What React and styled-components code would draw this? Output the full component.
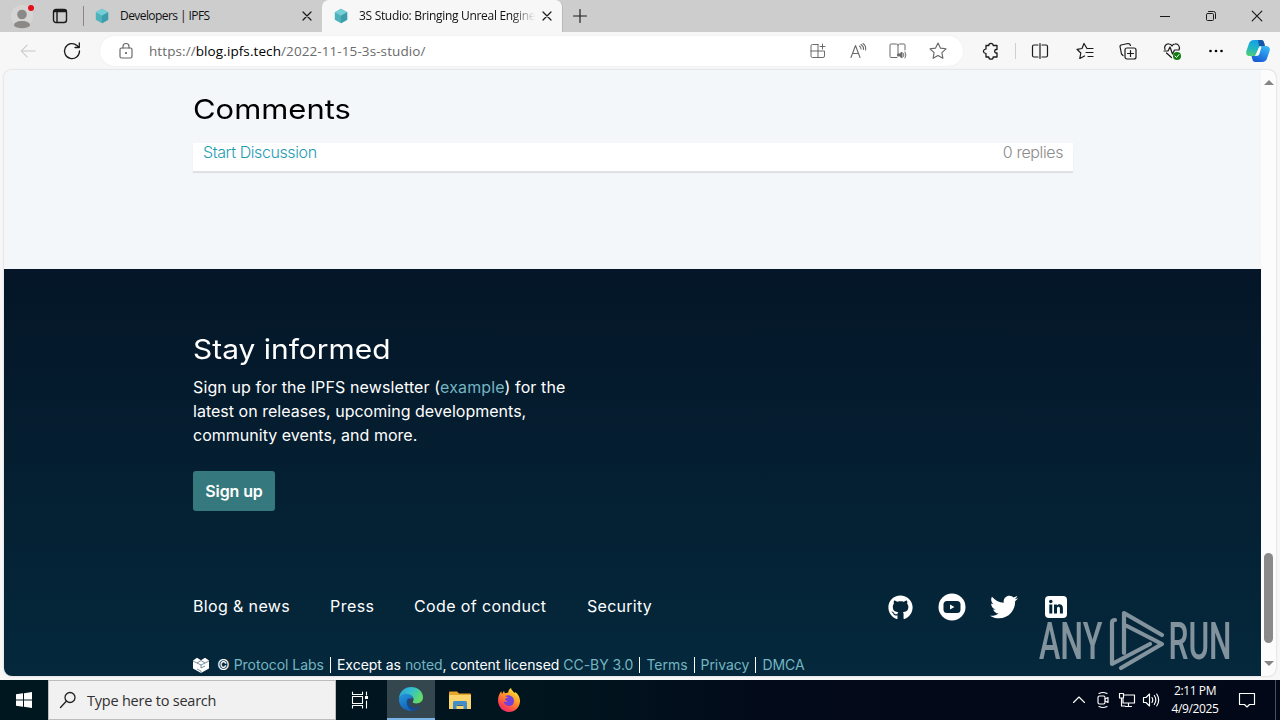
import React from 'react';
import styled, {createGlobalStyle} from 'styled-components';
import {FaGithub, FaTwitter} from 'react-icons/fa';

const GlobalStyle = createGlobalStyle`
  * {
    box-sizing: border-box;
  }
  body {
    margin: 0;
    overflow: hidden;
    font-family: "Open Sans", "Noto Sans", sans-serif;
  }
  svg {
    display: block;
    flex: none;
  }
`;

const Screen = styled.div`
  position: relative;
  display: flex;
  flex-direction: column;
  width: 1280px;
  height: 720px;
  overflow: hidden;
  background: #f7f7f7;
`;

const Slot = styled.span`
  display: flex;
  flex: none;
  align-items: center;
  justify-content: center;
  width: ${({width}) => width}px;
  height: 100%;
`;

const Line = styled.svg`
  width: ${({size}) => size || 20}px;
  height: ${({size}) => size || 20}px;
  fill: none;
  stroke: ${({color}) => color || '#1b1b1b'};
  stroke-width: ${({weight}) => weight || 1.15};
  stroke-linecap: round;
  stroke-linejoin: round;
`;

/* ---------- browser tabs ---------- */

const TabBar = styled.header`
  display: flex;
  height: 32px;
  background: #cdcdcd;
`;

const Separator = styled.span`
  flex: none;
  align-self: center;
  width: 1px;
  height: ${({height}) => height}px;
  margin-left: ${({left}) => left || 0}px;
  background: ${({color}) => color};
`;

const Tab = styled.div`
  display: flex;
  align-items: center;
  width: ${({width}) => width}px;
  padding: 0 8px 0 ${({active}) => active ? 12 : 11}px;
  background: ${({active}) => active ? '#f7f7f7' : 'transparent'};
  border-radius: 7px 7px 0 0;
  border-right: 1px solid ${({active}) => active ? '#b9b9b9' : 'transparent'};
`;

const TabTitle = styled.span`
  flex: 1;
  margin-left: 11px;
  overflow: hidden;
  white-space: nowrap;
  font-size: 12px;
  line-height: 18px;
  letter-spacing: ${({spacing}) => spacing}px;
  color: #111;
  ${({fade}) => fade && 'mask-image: linear-gradient(90deg, #000 152px, transparent 176px);'}
`;

const WindowControls = styled.div`
  display: flex;
  margin-left: auto;
`;

/* ---------- toolbar ---------- */

const Toolbar = styled.div`
  display: flex;
  align-items: center;
  height: 38px;
  padding-left: 6px;
`;

const AddressBar = styled.div`
  display: flex;
  align-items: center;
  width: 863px;
  height: 30px;
  margin: 0 3px 0 6px;
  padding: 0 6px 0 16px;
  border-radius: 15px;
  background: white;
  box-shadow: 0 0 2px #e8e8e8;
`;

const Url = styled.span`
  flex: 1;
  margin-left: 13px;
  font-size: 13.5px;
  letter-spacing: ${({spacing}) => spacing}px;
  color: #6b6b6b;
  b {
    font-weight: 400;
    color: #000;
  }
`;

/* ---------- web page ---------- */

const Viewport = styled.main`
  display: flex;
  height: 606px;
  margin: 0 4px 4px;
  overflow: hidden;
  border-radius: 8px;
  background: #fcfcfc;
  box-shadow: 0 0 2px #bdbdbd;
`;

const Page = styled.div`
  display: flex;
  flex-direction: column;
  width: 1257px;
  background: #f4f7fa;
  font-family: Inter, sans-serif;
`;

const Comments = styled.section`
  height: 199px;
  padding: 20px 188px 0 189px;
`;

const Heading = styled.h2`
  margin: 0;
  width: max-content;
  font-size: 27.5px;
  font-weight: 400;
  line-height: 38px;
  color: ${({color}) => color};
  transform: scaleX(${({stretch}) => stretch});
  transform-origin: left;
`;

const Thread = styled.div`
  display: flex;
  justify-content: space-between;
  height: 28px;
  margin-top: 15px;
  padding: 0 10px;
  background: white;
  box-shadow: 0 2px 1px rgba(0, 0, 0, 0.09);
  font-size: 16px;
  font-weight: 300;
  line-height: 19px;
  letter-spacing: -0.4px;
  color: #8b8b8b;
`;

const ThreadLink = styled.a`
  color: #1f9bb3;
`;

const Footer = styled.footer`
  display: flex;
  flex-direction: column;
  height: 407px;
  padding: 61px 188px 0 189px;
  background: linear-gradient(#041627, #05283c);
  color: white;
`;

const Newsletter = styled.p`
  margin: 7px 0 0;
  font-size: 16px;
  line-height: 24px;
`;

const NewsletterLine = styled.span`
  display: block;
  letter-spacing: ${({spacing}) => spacing}px;
`;

const Link = styled.a`
  color: #73b5c1;
`;

const SignUp = styled.button`
  width: 82px;
  height: 40px;
  margin-top: 24px;
  padding: 0;
  border: 0;
  border-radius: 3px;
  background: #35797e;
  color: white;
  font-family: Inter, sans-serif;
  font-size: 16px;
  font-weight: 600;
  letter-spacing: -0.1px;
`;

const FooterNav = styled.nav`
  display: flex;
  align-items: center;
  height: 30px;
  margin-top: 80px;
`;

const NavLink = styled.a`
  width: ${({width}) => width}px;
  white-space: nowrap;
  font-size: 16px;
  letter-spacing: ${({spacing}) => spacing}px;
`;

const Social = styled.div`
  display: flex;
  align-items: center;
  height: 30px;
  margin: 2px -9px 0 auto;
`;

const Legal = styled.div`
  display: flex;
  align-items: center;
  margin-top: 34px;
  height: 20px;
  white-space: nowrap;
  font-size: 14px;
  letter-spacing: ${({spacing}) => spacing}px;
  svg {
    margin-right: 8px;
  }
`;

const LegalText = styled.span`
  padding-right: 6px;
  line-height: 16px;
  & + & {
    padding-left: 6px;
    border-left: 1px solid white;
  }
`;

const Scrollbar = styled.div`
  display: flex;
  flex: 1;
  flex-direction: column;
  align-items: center;
  padding: 10px 0;
`;

const Arrow = styled.span`
  border: 5px solid transparent;
  border-top-width: ${({up}) => up ? 0 : 5}px;
  border-bottom-width: ${({up}) => up ? 5 : 0}px;
  border-${({up}) => up ? 'bottom' : 'top'}-color: #858585;
`;

const Thumb = styled.span`
  width: 9px;
  height: 90px;
  margin: auto 0 18px;
  border-radius: 5px;
  background: #8a8a8a;
`;

/* sits over the page in the corner */
const Watermark = styled.svg`
  position: absolute;
  left: 1036px;
  top: 606px;
  width: 210px;
  height: 70px;
  opacity: 0.5;
`;

/* ---------- taskbar ---------- */

const Taskbar = styled.footer`
  display: flex;
  align-items: center;
  height: 40px;
  background: linear-gradient(90deg, #001720, #00141e 45%, #030a1a 60%, #020817);
  color: white;
`;

const Search = styled.div`
  display: flex;
  align-items: center;
  width: 288px;
  height: 40px;
  padding-left: 10px;
  border: 1px solid #bcbcbc;
  background: #f1f1f1;
  color: #303030;
  font-size: 14.5px;
  letter-spacing: ${({spacing}) => spacing}px;
  svg {
    margin-right: 10px;
  }
`;

const ActiveApp = styled.div`
  display: flex;
  align-items: center;
  justify-content: center;
  width: 48px;
  height: 40px;
  margin-left: 3px;
  border-bottom: 2px solid #78b4e5;
  background: #34464e;
`;

const Tray = styled.div`
  display: flex;
  align-items: center;
  height: 40px;
  margin-left: auto;
`;

const Clock = styled.div`
  width: 64px;
  text-align: center;
  font-size: 12px;
  line-height: 18px;
  letter-spacing: -0.4px;
`;

const CubeIcon = () => (
  <svg width="14" height="16" viewBox="0 0 14 16">
    <path d="M7 .8 13.2 4.3v7.4L7 15.2.8 11.7V4.3z" fill="#4db2bc" />
    <path d="M7 .8 13.2 4.3 7 7.8.8 4.3z" fill="#75ced4" />
    <path d="M7 7.8 13.2 4.3v7.4L7 15.2z" fill="#3c9dab" />
  </svg>
);

const CloseIcon = ({size = 10, weight = 1.2}) => (
  <Line size={size} weight={weight} viewBox="0 0 10 10"><path d="m1 1 8 8M9 1 1 9" /></Line>
);

const EdgeLogo = () => (
  <svg width="26" height="26" viewBox="0 0 26 26">
    <defs>
      <linearGradient id="edgeTop" x1="0" y1="0" x2="1" y2="0.5">
        <stop offset="0" stopColor="#279fd9" />
        <stop offset="0.5" stopColor="#34bfce" />
        <stop offset="1" stopColor="#62dc66" />
      </linearGradient>
      <linearGradient id="edgeBody" x1="0" y1="0" x2="0.6" y2="1">
        <stop offset="0" stopColor="#2598dc" />
        <stop offset="1" stopColor="#105db2" />
      </linearGradient>
    </defs>
    <path d="M1 12C1.600 5.500 6.800 1 13 1c7 0 12 4.800 12 10.300 0 4-3 6.200-6.700 6.200-2.500 0-4-.8-3.500-1.700 1.700-2.200.8-6-3.600-7C7 8 3 9 1 12z" fill="url(#edgeTop)" />
    <path d="M1 13C1.500 9.500 5 7.600 8.600 7.700c3.600.1 6.500 2.200 6.500 5-1.900-1.200-5.200.2-5.200 4.100 0 4 5.500 7.200 12.100 4.300C19.500 24 16.500 25 13 25 6 25 .5 19.500 1 13z" fill="url(#edgeBody)" />
    <path d="M10 12.500c-3 4-.8 9.800 4.700 12.300 3-.2 5.500-1.500 7.500-3.700-6 2.200-11.500-1-11.500-4.700 0-1.700.6-3 1.900-4z" fill="#174a91" />
  </svg>
);

const FolderIcon = () => (
  <svg width="22" height="19" viewBox="0 0 22 19">
    <path d="M0 1.500Q0 .5 1 .5h7l2 2h11q1 0 1 1V17H0z" fill="#e7a62c" />
    <path d="M0 4h22v14H0z" fill="#fbd56b" />
    <path d="M4 18V11.500Q4 10 5.500 10h11Q18 10 18 11.500V18h-3.500v-4.500h-7V18z" fill="#3c8fcb" />
    <path d="M7.500 13.500h7V15h-7z" fill="#286ca2" />
  </svg>
);

const FirefoxLogo = () => (
  <svg width="24" height="24" viewBox="0 0 24 24">
    <defs>
      <linearGradient id="fox" x1="0.8" y1="0" x2="0.2" y2="1">
        <stop offset="0" stopColor="#fff13b" />
        <stop offset="0.45" stopColor="#ff9028" />
        <stop offset="0.8" stopColor="#fb3e52" />
        <stop offset="1" stopColor="#e22a80" />
      </linearGradient>
    </defs>
    <path d="M1 12C1 9 2.200 6 4.200 3.300L5 6l2-3.300.8 2.500 3.500-.8C11.200 2.500 12.500 1 14 0c.4 2.300 2 3 3.700 5l.5-1c3.300 2.300 5 6 4.800 9.500C22.500 19.500 18 24 12 24S1 19 1 12z" fill="url(#fox)" />
    <path d="M8 8c4-2 9 .3 9 5 0 3-2.200 5-5 5-3 0-5-2-5.300-4.700 1.500 1 3 .8 4-.2-2.200-.3-3.200-1.400-2-2.800 1-.3 2-.3 2.500-1.200C9.800 9 9 8.700 8 8z" fill="#7441d8" />
  </svg>
);

const Copilot = () => (
  <svg width="24" height="24" viewBox="0 0 24 24">
    <defs>
      <linearGradient id="copLeft" x1="0.5" y1="0" x2="0.2" y2="1">
        <stop offset="0" stopColor="#159fe8" />
        <stop offset="0.55" stopColor="#22b8c0" />
        <stop offset="1" stopColor="#54cd74" />
      </linearGradient>
      <linearGradient id="copRight" x1="0.8" y1="0" x2="0.3" y2="1">
        <stop offset="0" stopColor="#37b9f5" />
        <stop offset="1" stopColor="#1559d6" />
      </linearGradient>
    </defs>
    <path d="M8 1h7c2 0 2.500 1.200 3 3l.7 2.500H14L9 17H4c-3 0-4.500-2-3.600-5L3 4.500C3.700 2.300 5.300 1 8 1z" fill="url(#copLeft)" />
    <path d="M12 1h3.500c1.700 0 2.300 1.500 2.700 3l.8 3h-6z" fill="#1657a8" />
    <path d="M16 23H9.500c-2 0-2.700-1.200-3.200-3l-.8-3H10l5-10h5c3 0 4.500 2 3.600 5L21 19.500c-.7 2.200-2.300 3.500-5 3.500z" fill="url(#copRight)" />
    <path d="m13 8.300-3.200 8.500h1.600c1 0 1.600-.8 1.900-1.700L15.500 8z" fill="white" />
  </svg>
);

const App = () => {
  return (
    <>
      <GlobalStyle />
      <Screen>
        <TabBar>
          <Slot width={44}>
            <svg width="24" height="26" viewBox="0 0 24 26">
              <circle cx="12" cy="13" r="11" fill="#d7d5d3" />
              <circle cx="12" cy="11.500" r="4.800" fill="#8b8987" />
              <path d="M4 22.500c0-3 3-4.500 8-4.500s8 1.500 8 4.500c-2 3.500-14 3.500-16 0z" fill="#8b8987" />
              <circle cx="21" cy="5" r="3" fill="#e3101b" />
            </svg>
          </Slot>
          <Slot width={32}>
            <Line size={16} viewBox="0 0 16 16" weight={1.4}>
              <rect x="1.500" y="1.500" width="13" height="13" rx="2.500" />
              <path d="M2 3.500h12M2 2.500h12M5 4v10" />
            </Line>
          </Slot>
          <Separator height={20} left={7} color="#888" />
          <Tab width={238}>
            <CubeIcon />
            <TabTitle spacing={-0.57}>Developers | IPFS</TabTitle>
            <Slot width={12}><CloseIcon /></Slot>
          </Tab>
          <Tab width={241} active>
            <CubeIcon />
            <TabTitle spacing={-0.31} fade>3S Studio: Bringing Unreal Engine</TabTitle>
            <Slot width={14}><CloseIcon /></Slot>
          </Tab>
          <Slot width={33}>
            <Line size={14} viewBox="0 0 14 14"><path d="M7 .5v13M.5 7h13" /></Line>
          </Slot>
          <WindowControls>
            <Slot width={46}><Line size={10} viewBox="0 0 10 10"><path d="M0 5.500h10" /></Line></Slot>
            <Slot width={46}>
              <Line size={10} viewBox="0 0 10 10" weight={1}>
                <rect x=".5" y="2.500" width="7" height="7" rx="1" />
                <path d="M2.500.5h5q2 0 2 2v5" />
              </Line>
            </Slot>
            <Slot width={46}><CloseIcon size={12} weight={1} /></Slot>
          </WindowControls>
        </TabBar>

        <Toolbar>
          <Slot width={44}>
            <Line color="#c6c6c6" size={18} viewBox="0 0 20 20"><path d="M18 10H2.500M9 3.500 2.500 10 9 16.500" /></Line>
          </Slot>
          <Slot width={44}>
            <Line weight={1.3}><path d="M17.500 10A7.500 7.500 0 1 1 15 4.500L17 6.500M17.300 2v4.500H13" /></Line>
          </Slot>
          <AddressBar>
            <Slot width={20}>
              <Line color="#666" size={18} viewBox="0 0 18 18">
                <rect x="3" y="6" width="12" height="10" rx="1.500" />
                <path d="M6 6V4.500a3 3 0 0 1 6 0V6" />
                <circle cx="9" cy="11" r=".5" fill="#666" />
              </Line>
            </Slot>
            <Url spacing={0.09}>https://<b>blog.ipfs.tech</b>/2022-11-15-3s-studio/</Url>
            <Slot width={40}>
              <Line color="#6b6b6b" weight={1}>
                <path d="M10 3.500H4.500Q3 3.500 3 5v10q0 1.500 1.500 1.500H15q1.500 0 1.500-1.500v-5H3M10 3.500v13M14.500 3v5M12 5.500h5" />
              </Line>
            </Slot>
            <Slot width={40}>
              <Line color="#6b6b6b" weight={1.1}>
                <path d="M3 16.500 7.500 4.500 12 16.500M4.500 12.500h6M11.500 5q1.500 1 1.500 3M13 3.500q3 2 2.500 5M15 2.500q3.500 2.500 2.500 6.500" />
              </Line>
            </Slot>
            <Slot width={40}>
              <Line color="#6b6b6b" weight={1}>
                <path d="M9 16.500H3q-1 0-1-1V4q0-1 1-1h5.500Q10 3 10 4.500V13M10 4.500Q10 3 11.500 3H16q1 0 1 1v5" />
                <path d="M10 13h1.500l2.500-2v6l-2.500-2H10z" fill="#6b6b6b" />
                <path d="M15.500 12.500q1 1.500 0 3M17 11q2 3 0 6" />
              </Line>
            </Slot>
            <Slot width={39}>
              <Line color="#666" weight={1.1}>
                <path d="m10 2 2.400 5.100 5.600.7-4.100 3.900 1 5.600-4.900-2.700-4.900 2.700 1-5.600L2 7.800l5.600-.7z" />
              </Line>
            </Slot>
          </AddressBar>
          <Slot width={49}>
            <Line weight={1.3}>
              <path d="M5 4.500h2.800a2.200 2.200 0 0 1 4.400 0H16v4h-1a1.800 1.800 0 0 0 0 3.500h1v4h-3.800a2.200 2.200 0 0 1-4.400 0H5v-3.500L3.500 12a2 2 0 0 1 0-3.500L5 8z" />
            </Line>
          </Slot>
          <Separator height={16} color="#cfcfcf" />
          <Slot width={48}>
            <Line weight={1.2}><path d="M8 4H4Q2.500 4 2.500 5.500v9Q2.500 16 4 16h4M12 4h4q1.500 0 1.500 1.500v9Q17.500 16 16 16h-4M10 2.500v15" /></Line>
          </Slot>
          <Slot width={41}>
            <Line weight={1.2}><path d="M12 7.500 9 2.500 7 7.500l-5 .8 3.800 3.700-1 5.500L9.500 15M12 7.500h6M11 11.500h7M13 15.500h5" /></Line>
          </Slot>
          <Slot width={45}>
            <Line weight={1.2}>
              <rect x="7" y="7" width="11" height="11" rx="2" />
              <path d="M12.500 9.500v6M9.500 12.500h6M5 14.500 3.500 13 2 5.500Q2 4.500 3 4l7-1.500q2 0 2.500 2" />
            </Line>
          </Slot>
          <Slot width={44}>
            <Line weight={1.2}>
              <path d="M3 8.500C1.500 5 4.500 2.500 7 3c1.500 0 2.500 1 3 2 .5-1 1.500-2 3-2 3-.5 5.500 2.500 4 6M2 10h4l2-4 2.500 7 2-4h4.500M4.500 12l5 4.500" />
              <circle cx="15" cy="15" r="4" fill="#107c10" stroke="none" />
              <path d="m13 15 1.500 1.500 2.500-3" stroke="white" strokeWidth="1" />
            </Line>
          </Slot>
          <Slot width={43}>
            <svg width="16" height="4" viewBox="0 0 16 4"><circle cx="2.500" cy="2" r="1.300" /><circle cx="8" cy="2" r="1.300" /><circle cx="13.500" cy="2" r="1.300" /></svg>
          </Slot>
          <Slot width={41}><Copilot /></Slot>
        </Toolbar>

        <Viewport>
          <Page>
            <Comments>
              <Heading color="#000" stretch={1.125}>Comments</Heading>
              <Thread>
                <ThreadLink>Start Discussion</ThreadLink>
                <span>0 replies</span>
              </Thread>
            </Comments>
            <Footer>
              <Heading color="#fff" stretch={1.088}>Stay informed</Heading>
              <Newsletter>
                <NewsletterLine spacing={0.12}>Sign up for the IPFS newsletter (<Link>example</Link>) for the</NewsletterLine>
                <NewsletterLine spacing={0.02}>latest on releases, upcoming developments,</NewsletterLine>
                <NewsletterLine spacing={0.02}>community events, and more.</NewsletterLine>
              </Newsletter>
              <SignUp>Sign up</SignUp>
              <FooterNav>
                <NavLink width={137} spacing={0.36}>Blog &amp; news</NavLink>
                <NavLink width={84} spacing={0.45}>Press</NavLink>
                <NavLink width={173} spacing={0.38}>Code of conduct</NavLink>
                <NavLink width={70} spacing={0.27}>Security</NavLink>
                <Social>
                  <Slot width={52}><FaGithub size={25} /></Slot>
                  <Slot width={52}>
                    <svg width="28" height="28" viewBox="0 0 28 28">
                      <circle cx="14" cy="14" r="13.500" fill="white" />
                      <rect x="5.500" y="8" width="17" height="12" rx="3.500" fill="#052539" />
                      <path d="m12 11.500 4.500 2.500-4.500 2.500z" fill="white" />
                    </svg>
                  </Slot>
                  <Slot width={52}><FaTwitter size={28} /></Slot>
                  <Slot width={52}>
                    <svg width="22" height="22" viewBox="0 0 22 22">
                      <rect width="22" height="22" rx="4" fill="white" />
                      <circle cx="5.800" cy="5.500" r="1.700" fill="#052539" />
                      <path d="M4.300 8.500h3v9h-3zM9 8.500h2.900v1.200c1.500-2.300 6-1.900 6 2.300v5.500h-3v-5c0-2.300-2.900-2.200-2.900 0v5H9z" fill="#052539" />
                    </svg>
                  </Slot>
                </Social>
              </FooterNav>
              <Legal spacing={-0.03}>
                <svg width="16" height="16" viewBox="0 0 16 16">
                  <path d="m0 3.500 4-2.800 4 2.500L12 .7l4 2.800v8L8 16l-8-4.500z" fill="white" />
                  <path d="m0 4 8 4 8-4M8 8v3l4-2M8 16v-2l-4-2M4 6l4-2.500L12 6" fill="none" stroke="#5d7482" strokeWidth=".8" />
                </svg>
                <LegalText>© <Link>Protocol Labs</Link></LegalText>
                <LegalText>Except as <Link>noted</Link>, content licensed <Link>CC-BY 3.0</Link></LegalText>
                <LegalText><Link>Terms</Link></LegalText>
                <LegalText><Link>Privacy</Link></LegalText>
                <LegalText><Link>DMCA</Link></LegalText>
              </Legal>
            </Footer>
          </Page>
          <Scrollbar>
            <Arrow up />
            <Thumb />
            <Arrow />
          </Scrollbar>
        </Viewport>

        <Taskbar>
          <Slot width={48}>
            <svg width="16" height="16" viewBox="0 0 16 16" fill="white">
              <path d="M0 2.300 7 1.300v6.200H0zM8 1.200 16 0v7.500H8zM0 8.500h7v6.200l-7-1zM8 8.500h8V16l-8-1.200z" />
            </svg>
          </Slot>
          <Search spacing={-0.22}>
            <Line size={18} viewBox="0 0 18 18" color="#222" weight={1.3}><circle cx="11" cy="6.500" r="5" /><path d="M7.500 10 1.500 16.500" /></Line>
            Type here to search
          </Search>
          <Slot width={48}>
            <Line size={18} viewBox="0 0 18 18" color="#fff" weight={1.1}>
              <path d="M1.500 1v2.500h10V1M1.500 17v-2.500h10V17M1.500 5.500h10v7h-10zM15.500 1v3M15.500 10v7" />
              <rect x="14.500" y="5.500" width="2" height="2" fill="white" />
            </Line>
          </Slot>
          <ActiveApp><EdgeLogo /></ActiveApp>
          <Slot width={50}><FolderIcon /></Slot>
          <Slot width={48}><FirefoxLogo /></Slot>
          <Tray>
            <Slot width={24}><Line size={14} viewBox="0 0 14 14" color="#fff"><path d="m1.500 9.500 5.500-5.500 5.500 5.500" /></Line></Slot>
            <Slot width={24}>
              <Line size={18} viewBox="0 0 18 18" color="#fff">
                <rect x="4" y="5" width="7" height="8" rx="1.500" />
                <path d="m11 8 3-1.500v5L11 10M5 2.500q4-2 8 0M5 15.500q4 2 8 0" />
              </Line>
            </Slot>
            <Slot width={24}>
              <Line size={18} viewBox="0 0 18 18" color="#fff">
                <path d="M6 4h10.500v8H5V8M10.500 12v3M7.500 15.500h6M1.500 2.500h4V7h-4zM3.500 7v8H7" />
              </Line>
            </Slot>
            <Slot width={24}>
              <Line size={18} viewBox="0 0 18 18" color="#fff">
                <path d="M1.500 6.500H4L7.500 3v12L4 11.500H1.500zM10 6.500q1.500 2.500 0 5M12.300 4.500q3 4.500 0 9M14.700 3q4 6 0 12" />
              </Line>
            </Slot>
            <Clock>2:11 PM<br />4/9/2025</Clock>
            <Slot width={40}>
              <Line size={18} viewBox="0 0 18 18" color="#fff"><path d="M1.500 2.500h15v11h-5L9 16l-2.500-2.500h-5z" /></Line>
            </Slot>
            <Separator height={40} left={8} color="#4a4f5a" />
            <Slot width={4} />
          </Tray>
        </Taskbar>

        <Watermark viewBox="0 0 210 70" fill="none" stroke="#fff" strokeWidth="4.2" strokeLinejoin="round" strokeLinecap="round">
          <g fill="#fff" stroke="none" fontFamily="Roboto, sans-serif" fontSize="51" fontWeight="500">
            <text transform="translate(3 53) scale(.63 1)">ANY</text>
            <text transform="translate(132.500 53) scale(.62 1)">RUN</text>
          </g>
          <path d="M79 14q-3 0-3 3v41l38-20M88 47V7l38 22M91 20l35 18-41 24" />
        </Watermark>
      </Screen>
    </>
  );
};

export default App;
